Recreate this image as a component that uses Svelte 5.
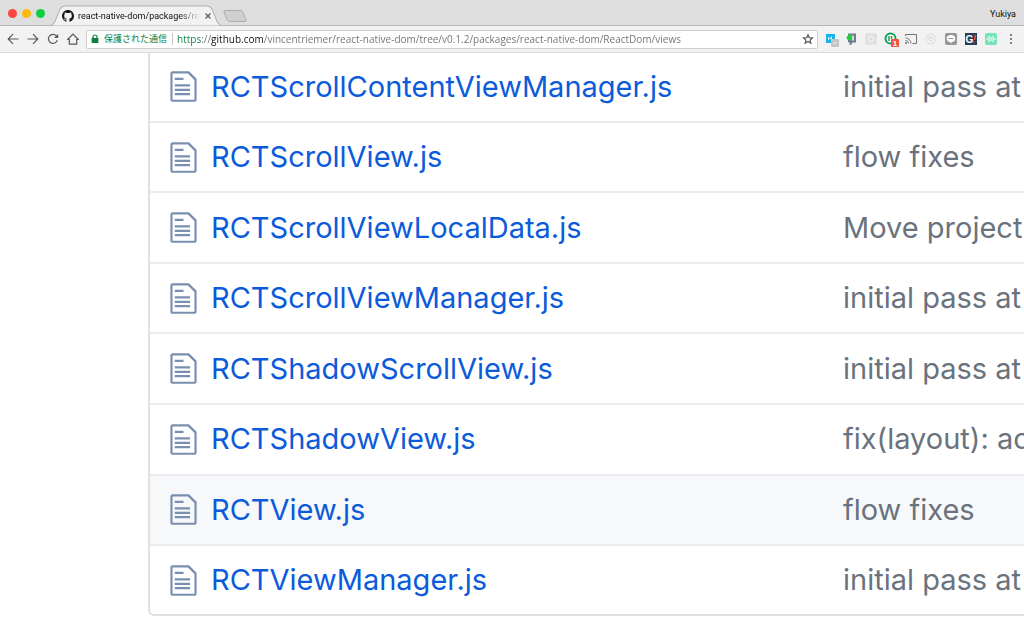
<script lang="ts">
  interface FileRow {
    name: string;
    message: string;
  }

  const files: FileRow[] = [
    { name: "RCTScrollContentViewManager.js", message: "initial pass at" },
    { name: "RCTScrollView.js", message: "flow fixes" },
    { name: "RCTScrollViewLocalData.js", message: "Move project" },
    { name: "RCTScrollViewManager.js", message: "initial pass at" },
    { name: "RCTShadowScrollView.js", message: "initial pass at" },
    { name: "RCTShadowView.js", message: "fix(layout): ac" },
    { name: "RCTView.js", message: "flow fixes" },
    { name: "RCTViewManager.js", message: "initial pass at" },
  ];

  let current = $state("RCTView.js");
  let url = $state(
    "https://github.com/vincentriemer/react-native-dom/tree/v0.1.2/packages/react-native-dom/ReactDom/views"
  );
</script>

<div class="window">
  <header>
    <div class="tabstrip">
      <div class="lights">
        <button class="light close" aria-label="Close window"></button>
        <button class="light minimize" aria-label="Minimize window"></button>
        <button class="light zoom" aria-label="Zoom window"></button>
      </div>
      <div class="tab">
        <svg class="shape" viewBox="0 0 170 22" preserveAspectRatio="none" aria-hidden="true">
          <path d="M0 22C3 21 4 19 5 17L10 4Q12 1 15 1H155Q158 1 160 4L165 17C166 19 167 21 170 22Z" fill="#f2f2f2" stroke="#b0b0b0" />
        </svg>
        <svg class="favicon" viewBox="0 0 16 16" aria-hidden="true">
          <path d="M8 0C3.58 0 0 3.58 0 8c0 3.54 2.29 6.53 5.47 7.59.4.07.55-.17.55-.38 0-.19-.01-.82-.01-1.49-2.01.37-2.53-.49-2.69-.94-.09-.23-.48-.94-.82-1.13-.28-.15-.68-.52-.01-.53.63-.01 1.08.58 1.23.82.72 1.21 1.87.87 2.33.66.07-.52.28-.87.51-1.07-1.78-.2-3.64-.89-3.64-3.95 0-.87.31-1.59.82-2.15-.08-.2-.36-1.02.08-2.12 0 0 .67-.21 2.2.82.64-.18 1.32-.27 2-.27s1.36.09 2 .27c1.53-1.04 2.2-.82 2.2-.82.44 1.1.16 1.92.08 2.12.51.56.82 1.27.82 2.15 0 3.07-1.87 3.75-3.65 3.95.29.25.54.73.54 1.48 0 1.07-.01 1.93-.01 2.2 0 .21.15.46.55.38A8.01 8.01 0 0 0 16 8c0-4.42-3.58-8-8-8z" fill="#191717" />
        </svg>
        <span class="title">react-native-dom/packages/re</span>
        <button class="tab-close" aria-label="Close tab">
          <svg viewBox="0 0 8 8"><path d="M1.500 1.500L6.500 6.500M6.500 1.500L1.500 6.500" stroke="#5a5a5a" stroke-width="1.2" /></svg>
        </button>
      </div>
      <button class="new-tab" aria-label="New tab">
        <svg viewBox="0 0 26 14"><path d="M3 1.500H18Q20 1.500 21 3.500L24 11Q24.500 12.500 23 12.500H8Q6 12.500 5 10.500L2 3Q1.500 1.500 3 1.500Z" fill="#d0d0d0" stroke="#acacac" /></svg>
      </button>
      <span class="profile">Yukiya</span>
    </div>

    <div class="toolbar">
      <nav>
        <button aria-label="Back"><svg viewBox="0 0 12 12"><path d="M11.500 6H1.500M6 1.200L1.200 6L6 10.800" /></svg></button>
        <button aria-label="Forward"><svg viewBox="0 0 12 12"><path d="M.5 6H10.500M6 1.200L10.800 6L6 10.800" /></svg></button>
        <button aria-label="Reload"><svg viewBox="0 0 12 12"><path d="M10.300 7.200A4.500 4.500 0 1 1 9.300 2.900L10.500 4.200" /><path d="M11.200 .8V5H7Z" fill="#5a5a5a" stroke="none" /></svg></button>
        <button aria-label="Home"><svg viewBox="0 0 12 12"><path d="M.7 6.500L6 1.200L11.300 6.500H9.700V11.200H2.300V6.500Z" /></svg></button>
      </nav>
      <div class="omnibox">
        <svg class="lock" viewBox="0 0 8 10" aria-hidden="true"><path d="M2 4.500V3a2 2 0 0 1 4 0V4.500" fill="none" stroke="#0b8043" stroke-width="1.200" /><rect x=".6" y="4" width="6.800" height="5" rx=".6" fill="#0b8043" /></svg>
        <label for="url">保護された通信</label>
        <input id="url" type="text" spellcheck="false" bind:value={url} />
        <button aria-label="Bookmark this page">
          <svg viewBox="0 0 12 12"><path d="M6 1.800L7.200 4.700L10.500 5L8.100 7.100L8.800 10.200L6 8.500L3.200 10.200L3.900 7.100L1.500 5L4.800 4.700Z" /></svg>
        </button>
      </div>
      <div class="extensions">
        <button aria-label="Notes">
          <svg viewBox="0 0 16 16"><path d="M3 3H12V8H8V12H3Z" fill="#12b4ea" /><path d="M5.500 9V6.500L8.500 8V5.500" fill="none" stroke="#e4f7fd" stroke-width="1" /><rect x="8" y="8" width="8" height="8" rx="1" fill="#c4c4c4" /><path d="M10.500 12H13.500" stroke="#fff" /></svg>
        </button>
        <button aria-label="Evernote">
          <svg viewBox="0 0 16 16"><path d="M5 2.500H13V11.500H9.500L8 14H6.500L7 11.500H5Z" fill="#6f7b8c" /><path d="M8.500 4.500H11V9.500H8.500Z" fill="#cfd6de" /><path d="M3.500 6L7 3H9V9H5Q3.500 8.500 3.500 6Z" fill="#22cf38" /></svg>
        </button>
        <button aria-label="React developer tools">
          <svg viewBox="0 0 16 16"><rect x="2.500" y="2.500" width="11" height="11" rx="1" fill="#d9d9d9" /><g fill="none" stroke="#f0f0f0" stroke-width=".8"><ellipse cx="8" cy="8" rx="4.500" ry="1.800" /><ellipse cx="8" cy="8" rx="4.500" ry="1.800" transform="rotate(60 8 8)" /><ellipse cx="8" cy="8" rx="4.500" ry="1.800" transform="rotate(120 8 8)" /></g></svg>
        </button>
        <button aria-label="Feed, 1 new">
          <svg viewBox="0 0 16 16"><circle cx="7.500" cy="7.500" r="5" fill="#fff" stroke="#18a05a" stroke-width="2" /><path d="M6 5V10M8.500 5V8" stroke="#18a05a" stroke-width="1.500" /><rect x="8" y="8" width="8" height="8" rx="1" fill="#f2543d" /><text x="12" y="15" fill="#fff" font-size="8" font-weight="700" text-anchor="middle">1</text></svg>
        </button>
        <button aria-label="Cast">
          <svg viewBox="0 0 16 16" fill="none" stroke="#757575"><path d="M2.500 5V3.500H13.500V12.500H9.500M2.500 7A5.500 5.500 0 0 1 8 12.500M2.500 9.500A3 3 0 0 1 5.500 12.500" /><circle cx="3" cy="12" r=".6" fill="#757575" /></svg>
        </button>
        <button aria-label="Radar">
          <svg viewBox="0 0 16 16" fill="none" stroke="#dcdcdc"><circle cx="8" cy="8" r="5" /><circle cx="8" cy="8" r="2" /><path d="M4 4L8 8" /></svg>
        </button>
        <button aria-label="Line">
          <svg viewBox="0 0 16 16"><rect x="2" y="2" width="12" height="12" rx="2" fill="#969696" /><ellipse cx="8" cy="7.500" rx="4.300" ry="3.500" fill="#fff" /><path d="M6 9.500H10L8 12.500Z" fill="#fff" /><path d="M5.500 7.500H10.500" stroke="#969696" /></svg>
        </button>
        <button aria-label="Gyazo">
          <svg viewBox="0 0 16 16"><rect x="2" y="2" width="12" height="12" fill="#263f5d" /><text x="6.500" y="11.500" fill="#fff" font-size="10" font-weight="700" text-anchor="middle">G</text><path d="M12.500 4L11.500 9M11 10.500V12" stroke="#f04a3c" stroke-width="1.500" /></svg>
        </button>
        <button aria-label="Voice">
          <svg viewBox="0 0 16 16"><rect x="2" y="2" width="12" height="12" rx="2" fill="#77e3b8" /><path d="M4 7V9M6 5V11M8 6V10M10 5V11M12 7V9" stroke="#eefcf6" stroke-width="1.200" /></svg>
        </button>
        <button aria-label="Menu">
          <svg viewBox="0 0 16 16" fill="#5a5a5a"><circle cx="8" cy="4" r="1" /><circle cx="8" cy="8" r="1" /><circle cx="8" cy="12" r="1" /></svg>
        </button>
      </div>
    </div>
  </header>

  <main>
    <div class="files">
      <table>
        <tbody>
          {#each files as file (file.name)}
            <tr class:current={file.name === current} onmouseenter={() => (current = file.name)}>
              <td class="icon">
                <svg viewBox="0 0 12 16" aria-hidden="true">
                  <path d="M6 5H2V4h4v1zM2 8h7V7H2v1zm0 2h7V9H2v1zm0 2h7v-1H2v1zm10-7.500V14c0 .55-.45 1-1 1H1c-.55 0-1-.45-1-1V2c0-.55.45-1 1-1h7.500L12 4.500zM11 5L8 2H1v12h10V5z" />
                </svg>
              </td>
              <td class="name"><a href={"#" + file.name}>{file.name}</a></td>
              <td class="message">{file.message}</td>
            </tr>
          {/each}
        </tbody>
      </table>
    </div>
  </main>
</div>

<style>
  :global(body) {
    margin: 0;
    background: #fff;
  }
  .window {
    display: flex;
    flex-direction: column;
    height: 100vh;
    overflow: hidden;
    font-family: Inter, "Noto Sans CJK JP", sans-serif;
  }
  header {
    font-family: Roboto, "Noto Sans CJK JP", sans-serif;
  }
  button {
    border: 0;
    padding: 0;
    background: none;
    flex: none;
  }
  svg {
    display: block;
  }
  .tabstrip {
    display: flex;
    align-items: center;
    height: 26px;
    box-sizing: border-box;
    border-bottom: 1px solid #b8b8b8;
    background: #dedede;
  }
  .lights {
    display: flex;
    gap: 5px;
    padding: 2px 0 0 8px;
  }
  .light {
    width: 9px;
    height: 9px;
    border-radius: 50%;
  }
  .light.close {
    background: #fc4642;
  }
  .light.minimize {
    background: #fdbc0b;
  }
  .light.zoom {
    background: #0fcf3f;
  }
  .tab {
    position: relative;
    display: flex;
    align-items: center;
    align-self: flex-end;
    gap: 4px;
    width: 172px;
    height: 21px;
    box-sizing: border-box;
    margin: 0 0 -1px 5px;
    padding: 0 10px 0 12px;
  }
  .shape {
    position: absolute;
    inset: 0;
    width: 100%;
    height: 100%;
  }
  .favicon,
  .title,
  .tab-close {
    position: relative;
  }
  .favicon {
    flex: none;
    width: 12px;
    height: 12px;
  }
  .title {
    flex: 1;
    overflow: hidden;
    white-space: nowrap;
    font-size: 9px;
    color: #111;
    mask-image: linear-gradient(to right, #000 calc(100% - 20px), transparent);
  }
  .tab-close svg {
    width: 8px;
    height: 8px;
  }
  .new-tab svg {
    width: 26px;
    height: 14px;
  }
  .new-tab {
    margin-top: 7px;
  }
  .profile {
    margin-left: auto;
    padding: 2px 8px 0 0;
    font-size: 9px;
    color: #111;
  }
  .toolbar {
    display: flex;
    align-items: center;
    height: 27px;
    box-sizing: border-box;
    border-bottom: 1px solid #dadada;
    background: #f2f2f2;
  }
  nav {
    display: flex;
    gap: 8px;
    padding: 0 7px;
  }
  nav svg,
  .omnibox button svg {
    width: 12px;
    height: 12px;
    fill: none;
    stroke: #5a5a5a;
    stroke-width: 1.2;
  }
  .omnibox {
    display: flex;
    flex: 1;
    align-items: center;
    min-width: 0;
    height: 19px;
    box-sizing: border-box;
    border: 1px solid #cfcfcf;
    border-radius: 2px;
    padding: 0 3px 0 4px;
    background: #fff;
  }
  .lock {
    flex: none;
    width: 8px;
    height: 10px;
    margin-right: 5px;
  }
  label {
    flex: none;
    border-right: 1px solid #c4c4c4;
    padding-right: 5px;
    font-size: 9px;
    line-height: 12px;
    color: #0b8043;
  }
  input {
    flex: 1;
    min-width: 0;
    border: 0;
    outline: 0;
    padding: 0;
    margin-left: 4px;
    font: 10px "Open Sans", sans-serif;
    color: transparent;
    caret-color: #222;
    /* scheme, separator, host and path each get their own colour */
    background: linear-gradient(to right, #0b8043 25px, #707070 25px 34px, #111 34px 87px, #707070 87px);
    background-clip: text;
  }
  .extensions {
    display: flex;
    gap: 4px;
    padding: 0 5px;
  }
  .extensions svg {
    width: 16px;
    height: 16px;
  }
  main {
    display: flex;
    flex: 1;
    min-height: 0;
    padding: 0 0 8px 148px;
  }
  .files {
    display: flex;
    flex: 1;
    min-width: 0;
    overflow: hidden;
    border: 2px solid #dfe2e5;
    border-width: 0 0 2px 2px;
    border-radius: 0 0 0 6px;
  }
  table {
    width: 100%;
    table-layout: fixed;
    border-collapse: collapse;
  }
  tr + tr td {
    border-top: 2px solid #eaecef;
  }
  td {
    overflow: hidden;
    padding: 0;
    white-space: nowrap;
    font-size: 29px;
    line-height: 40px;
  }
  .current {
    background: #f6f8fa;
  }
  .icon {
    width: 61px;
  }
  .icon svg {
    width: 27px;
    height: 35px;
    margin-left: 20px;
    fill: #7a8fb0;
  }
  .name {
    width: 632px;
  }
  .name a {
    color: #0b5bdb;
    text-decoration: none;
  }
  .message {
    color: #6a737d;
  }
</style>
